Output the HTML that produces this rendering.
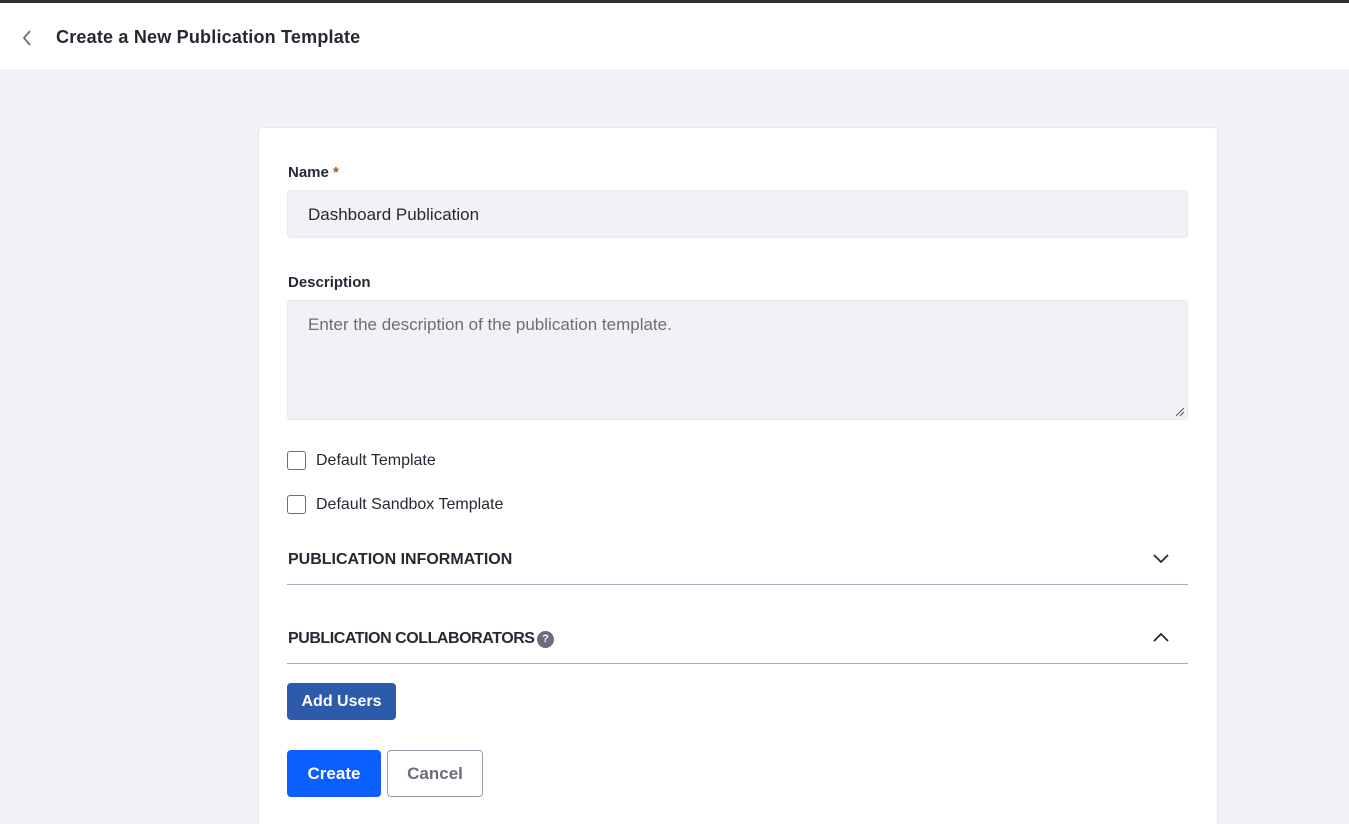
<!DOCTYPE html>
<html style="width:1349px;height:824px;overflow:hidden"><head><style>
*{box-sizing:border-box;margin:0;padding:0}
body{width:1349px;height:824px;overflow:hidden;background:#f1f2f5;font-family:"Liberation Sans",sans-serif;color:#272833;position:relative}
.top{position:absolute;left:0;top:0;width:1349px;height:3px;background:#2d2e36}
.hdr{position:absolute;left:0;top:3px;width:1349px;height:66px;background:#fff}
.hdr .t{position:absolute;left:56px;top:24px;font-size:18px;font-weight:bold;color:#272833;letter-spacing:0.2px}
.card{position:absolute;left:258px;top:127px;width:960px;height:697px;background:#fff;border:1px solid #e7e7ed;border-bottom:none;border-radius:4px 4px 0 0}
.abs{position:absolute}
.lbl{font-size:15px;font-weight:bold;color:#272833}
.inp{left:287px;width:901px;background:#f1f2f5;border:1px solid #e7e7ed;border-radius:4px;font-size:17px;padding:14px 20px}
.cb{left:287px;width:19px;height:19px;border:1px solid #6b6c7e;border-radius:3px;background:#fff}
.cbl{left:316px;font-size:16px;color:#272833}
.sec{left:288px;font-size:16px;font-weight:bold;color:#272833}
.line{left:287px;width:901px;height:1px;background:#a7a9bc}
.btn{border-radius:4px;font-size:17px;font-weight:bold;text-align:center}
</style></head><body>
<div class="top"></div>
<div class="hdr">
<svg class="abs" style="left:20px;top:26px" width="14" height="18" viewBox="0 0 14 18"><path d="M10 2L4 9l6 7" fill="none" stroke="#6b6c7e" stroke-width="1.8"/></svg>
<div class="t">Create a New Publication Template</div>
</div>
<div class="card"></div>
<div class="abs lbl" style="left:288px;top:164px">Name<span style="color:#b95000"> *</span></div>
<div class="abs inp" style="top:190px;height:48px;padding-top:14px;color:#272833">Dashboard Publication</div>
<div class="abs lbl" style="left:288px;top:274px">Description</div>
<div class="abs inp" style="top:300px;height:120px;padding-top:14px;color:#6b6c7e">Enter the description of the publication template.</div>
<svg class="abs" style="left:1175px;top:407px" width="10" height="10"><path d="M1 9L9 1M5 9L9 5" stroke="#555" stroke-width="1"/></svg>
<div class="abs cb" style="top:451px"></div><div class="abs cbl" style="top:452px">Default Template</div>
<div class="abs cb" style="top:495px"></div><div class="abs cbl" style="top:496px">Default Sandbox Template</div>
<div class="abs sec" style="top:551px">PUBLICATION INFORMATION</div>
<svg class="abs" style="left:1153px;top:553px" width="16" height="12"><path d="M1 2l7 7 7-7" fill="none" stroke="#272833" stroke-width="1.8"/></svg>
<div class="abs line" style="top:584px"></div>
<div class="abs sec" style="top:630px;letter-spacing:-0.45px">PUBLICATION COLLABORATORS</div>
<div class="abs" style="left:537px;top:631px;width:17px;height:17px;border-radius:50%;background:#6b6c7e;color:#fff;font-size:11px;font-weight:bold;text-align:center;line-height:17px">?</div>
<svg class="abs" style="left:1153px;top:631px" width="16" height="12"><path d="M1 10l7-7 7 7" fill="none" stroke="#272833" stroke-width="1.8"/></svg>
<div class="abs line" style="top:663px"></div>
<div class="abs btn" style="left:287px;top:683px;width:109px;height:37px;background:#2e5aac;color:#fff;line-height:37px;font-size:16px">Add Users</div>
<div class="abs btn" style="left:287px;top:750px;width:94px;height:47px;background:#0b5fff;color:#fff;line-height:47px">Create</div>
<div class="abs btn" style="left:387px;top:750px;width:96px;height:47px;background:#fff;border:1px solid #9a9baa;color:#6b6c7e;line-height:45px">Cancel</div>
</body></html>
